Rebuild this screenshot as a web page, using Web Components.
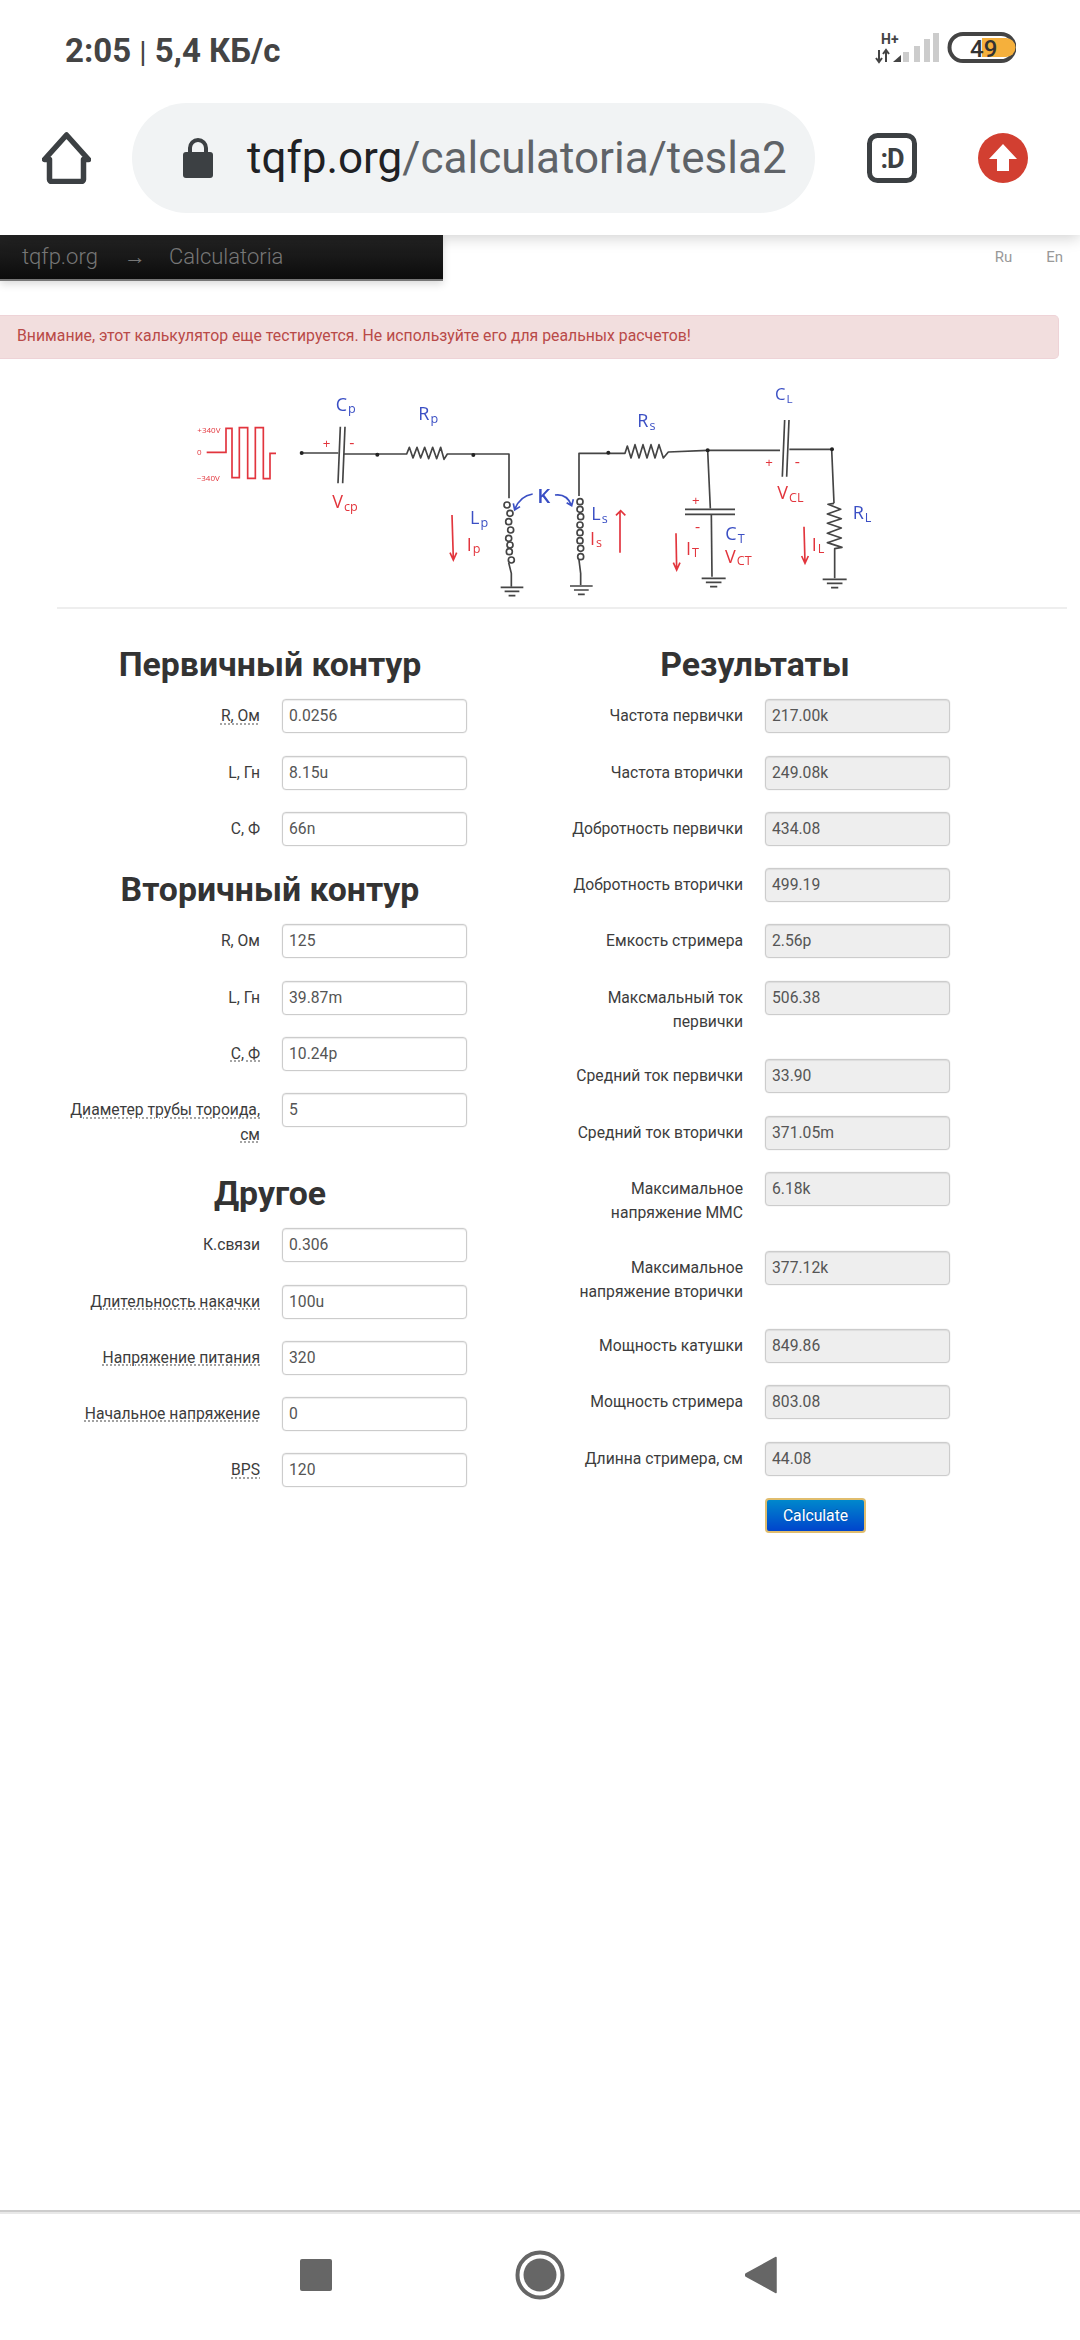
<!DOCTYPE html>
<html lang="ru">
<head>
<meta charset="utf-8">
<title>tesla2</title>
<style>
  html, body { margin: 0; padding: 0; background: #fff; }
  body { font-family: Roboto, "Liberation Sans", sans-serif; width: 1080px; height: 2340px; overflow: hidden; display: flex; flex-direction: column; }
  page-main { flex: 1; }
</style>
</head>
<body>
<phone-header></phone-header>
<page-main>
  <site-topbar></site-topbar>
  <alert-box>Внимание, этот калькулятор еще тестируется. Не используйте его для реальных расчетов!</alert-box>
  <circuit-diagram></circuit-diagram>
  <calc-form>
    <form-column slot="left">
      <h-title>Первичный контур</h-title>
      <calc-field hint value="0.0256">R, Ом</calc-field>
      <calc-field value="8.15u">L, Гн</calc-field>
      <calc-field value="66n">C, Ф</calc-field>
      <h-title>Вторичный контур</h-title>
      <calc-field value="125">R, Ом</calc-field>
      <calc-field value="39.87m">L, Гн</calc-field>
      <calc-field hint value="10.24p">C, Ф</calc-field>
      <calc-field hint value="5">Диаметер трубы тороида, см</calc-field>
      <h-title>Другое</h-title>
      <calc-field value="0.306">К.связи</calc-field>
      <calc-field hint value="100u">Длительность накачки</calc-field>
      <calc-field hint value="320">Напряжение питания</calc-field>
      <calc-field hint value="0">Начальное напряжение</calc-field>
      <calc-field hint value="120">BPS</calc-field>
    </form-column>
    <form-column slot="right">
      <h-title>Результаты</h-title>
      <calc-field readonly value="217.00k">Частота первички</calc-field>
      <calc-field readonly value="249.08k">Частота вторички</calc-field>
      <calc-field readonly value="434.08">Добротность первички</calc-field>
      <calc-field readonly value="499.19">Добротность вторички</calc-field>
      <calc-field readonly value="2.56p">Емкость стримера</calc-field>
      <calc-field readonly value="506.38">Максмальный ток первички</calc-field>
      <calc-field readonly value="33.90">Средний ток первички</calc-field>
      <calc-field readonly value="371.05m">Средний ток вторички</calc-field>
      <calc-field readonly value="6.18k">Максимальное напряжение ММС</calc-field>
      <calc-field readonly value="377.12k">Максимальное напряжение вторички</calc-field>
      <calc-field readonly value="849.86">Мощность катушки</calc-field>
      <calc-field readonly value="803.08">Мощность стримера</calc-field>
      <calc-field readonly value="44.08">Длинна стримера, см</calc-field>
      <calc-button>Calculate</calc-button>
    </form-column>
  </calc-form>
</page-main>
<nav-bar></nav-bar>

<script>
function shadow(el, html) {
  el.attachShadow({ mode: 'open' }).innerHTML = html;
}

class PhoneHeader extends HTMLElement {
  constructor() {
    super();
    shadow(this, `
      <style>
        :host { display: block; height: 235px; background: #fff; position: relative; z-index: 2; box-shadow: 0 3px 14px rgba(0,0,0,.18); }
        .status { height: 100px; display: flex; align-items: flex-start; justify-content: space-between; padding: 31px 64px 0 65px; box-sizing: border-box; }
        .time { font: 700 33px/40px Roboto, sans-serif; color: #444; white-space: nowrap; }
        .time span { font-weight: 400; font-size: 30px; }
        .indicators { margin-top: 1px; }
        .bar { height: 135px; display: flex; align-items: center; padding: 0 52px 19px 42px; box-sizing: border-box; }
        .pill { width: 684px; height: 110px; margin-left: 41px; border-radius: 55px; background: #f1f3f4; display: flex; align-items: center; box-sizing: border-box; padding-left: 51px; overflow: hidden; }
        .url { font: 400 44px/54px Roboto, sans-serif; margin-left: 34px; color: #5f6368; white-space: nowrap; }
        .url b { font-weight: 400; color: #202124; }
        .tab { margin-left: 52px; }
        .up { margin-left: 61px; }
        svg { display: block; flex: none; }
      </style>
      <div class="status">
        <div class="time">2:05 <span>|</span> 5,4 КБ/с</div>
        <svg class="indicators" width="141" height="36" viewBox="0 0 141 36">
          <text x="6" y="12" font-family="Roboto, sans-serif" font-weight="700" font-size="14" fill="#444">H+</text>
          <path d="M4 18v12M1 26l3 4 3-4M11 30V18M8 22l3-4 3 4" fill="none" stroke="#444" stroke-width="2"/>
          <path d="M18 30l8-7v7z" fill="#444"/>
          <path d="M29 30V20h6v10zM40 30V14h6v16zM50 30V7h6v23zM59 30V1h6v29z" fill="#ccc" transform="translate(-1 0)"/>
          <rect x="74.5" y="2" width="65" height="27" rx="13.5" fill="#fff" stroke="#444" stroke-width="4"/>
          <path d="M107 6h24a9.500 9.500 0 0 1 0 19h-24z" fill="#f5b03c"/>
          <text x="95" y="25" font-family="Roboto, sans-serif" font-weight="500" font-size="24" fill="#333">49</text>
        </svg>
      </div>
      <div class="bar">
        <svg width="49" height="52" viewBox="0 0 49 52">
          <path d="M24.500 3L2.500 27.500H7.500V47.500a2 2 0 0 0 2 2H39.500a2 2 0 0 0 2-2V27.500H46.500Z" fill="none" stroke="#3c4043" stroke-width="5.500" stroke-linejoin="round"/>
        </svg>
        <div class="pill">
          <svg width="30" height="40" viewBox="0 0 30 40">
            <path d="M7 17V10a8 8 0 0 1 16 0v7" fill="none" stroke="#3c4043" stroke-width="4"/>
            <rect x="0" y="14" width="30" height="26" rx="3" fill="#3c4043"/>
          </svg>
          <div class="url"><b>tqfp.org</b>/calculatoria/tesla2</div>
        </div>
        <svg class="tab" width="50" height="50" viewBox="0 0 50 50">
          <rect x="2.500" y="2.500" width="45" height="45" rx="8" fill="none" stroke="#3c4043" stroke-width="5"/>
          <text x="25" y="34.500" text-anchor="middle" font-family="Roboto, sans-serif" font-weight="700" font-size="27" letter-spacing="-1" fill="#3c4043">:D</text>
        </svg>
        <svg class="up" width="50" height="50" viewBox="0 0 50 50">
          <circle cx="25" cy="25" r="25" fill="#d23f31"/>
          <path d="M25 11L39 26H31V38H19V26H11Z" fill="#fff"/>
        </svg>
      </div>
    `);
  }
}

class SiteTopbar extends HTMLElement {
  constructor() {
    super();
    shadow(this, `
      <style>
        :host { display: flex; justify-content: space-between; align-items: flex-start; height: 46px; }
        .crumbs { width: 443px; height: 46px; box-sizing: border-box; background: linear-gradient(#242424, #0c0c0c); border-bottom: 2px solid #777; box-shadow: 0 3px 8px rgba(0,0,0,.15); padding-left: 22px; display: flex; align-items: center; font: 300 22px/30px Roboto, sans-serif; color: #777; white-space: nowrap; }
        .arrow { margin: 0 23px 0 26px; font-size: 22px; line-height: 30px; }
        .lang { display: flex; gap: 34px; padding: 12px 17px 0 0; font: 400 15px/20px Roboto, sans-serif; color: #999; }
      </style>
      <div class="crumbs"><span>tqfp.org</span><span class="arrow">→</span><span>Calculatoria</span></div>
      <div class="lang"><span>Ru</span><span>En</span></div>
    `);
  }
}

class AlertBox extends HTMLElement {
  constructor() {
    super();
    shadow(this, `
      <style>
        :host { display: block; box-sizing: border-box; width: 1059px; height: 44px; margin-top: 34px; padding: 0 17px; background: #f2dede; border: 1px solid #eed3d7; border-left: 0; border-radius: 0 5px 5px 0; color: #b94a48; font: 400 15.800px/40px Roboto, sans-serif; white-space: nowrap; }
      </style>
      <slot></slot>
    `);
  }
}

class CircuitDiagram extends HTMLElement {
  constructor() {
    super();
    const B = '#3a4fc4', R = '#e2353c';
    const lbl = (x, y, c, s, sub, size) =>
      `<text x="${x}" y="${y}" fill="${c}" font-size="${size || 54}">${s}<tspan font-size="${(size || 54) * .7}" dx="3" dy="8">${sub || ''}</tspan></text>`;
    const gnd = (x, y, w) =>
      `<path d="M${x - w} ${y}h${w * 2}M${x - w * .65} ${y + 12}h${w * 1.3}M${x - w * .3} ${y + 25}h${w * .6}"/>`;
    const coil = (pts) => pts.map(p => `<circle cx="${p[0]}" cy="${p[1]}" r="9"/>`).join('');
    const dot = (x, y) => `<circle cx="${x}" cy="${y}" r="6" fill="#222" stroke="none"/>`;
    shadow(this, `
      <style>
        :host { display: block; height: 230px; margin-top: 11px; padding-left: 170px; }
        svg { display: block; }
        text { font-family: "Open Sans", "Noto Sans", sans-serif; }
      </style>
      <svg width="740" height="230" viewBox="0 0 2220 690">
        <defs><filter id="soft" x="-2%" y="-2%" width="104%" height="104%"><feGaussianBlur stdDeviation="1.300"/></filter></defs>
        <g filter="url(#soft)">
          <!-- primary side -->
          <g fill="none" stroke="${R}" stroke-width="5">
            <path d="M110 247H168V175H186V323H208V173H233V325H256V173H280V326H300V250H318"/>
            <path d="M846 435L850 568M840 548L850 570L860 548"/>
          </g>
          <g fill="none" stroke="#444" stroke-width="5" stroke-linejoin="round">
            <path d="M395 249H505M522 252H710L718 232 729 264 741 232 752 264 764 232 776 266 788 232 800 266 812 232 822 268 832 252H1017V385"/>
            <path d="M511 170L504 340M525 170L518 340"/>
            ${coil([[1011,405],[1020,430],[1016,455],[1022,480],[1016,505],[1020,525],[1018,545],[1024,570]])}
            <path d="M1016 578L1024 610V650"/>
            ${gnd(1026, 652, 34)}
          </g>
          ${dot(395, 249)}${dot(622, 254)}${dot(910, 255)}
          <g fill="none" stroke="${B}" stroke-width="5">
            <path d="M1088 372Q1050 378 1034 418M1030 400L1034 420L1050 410"/>
          </g>
          ${lbl(82, 189, R, '+340V', '', 24)}
          ${lbl(81, 256, R, '0', '', 24)}
          ${lbl(80, 334, R, '~340V', '', 24)}
          ${lbl(497, 122, B, 'C', 'p')}
          ${lbl(745, 150, B, 'R', 'p')}
          ${lbl(458, 234, R, '+', '', 40)}
          ${lbl(538, 234, R, '-', '', 48)}
          ${lbl(487, 415, R, 'V', 'cp')}
          ${lbl(900, 462, B, 'L', 'p')}
          ${lbl(890, 542, R, 'I', 'p')}
          ${lbl(1104, 400, B, 'K', '', 60)}

          <!-- secondary side -->
          <g transform="translate(1080 0)">
            <g fill="none" stroke="${R}" stroke-width="5">
              <path d="M270 548V424M258 436L272 422L286 436"/>
              <path d="M438 490L440 598M430 578L440 600L450 578"/>
              <path d="M822 470L825 578M815 558L825 580L835 558"/>
            </g>
            <g fill="none" stroke="#444" stroke-width="5" stroke-linejoin="round">
              <path d="M147 378V250H285L292 228 303 264 315 224 327 264 339 224 351 264 363 224 375 264 387 224 400 264 415 246L533 241H750M778 238H905L912 400"/>
              <path d="M764 150L757 320M777 150L770 320"/>
              ${coil([[150,395],[150,418],[152,440],[150,465],[150,488],[150,512],[152,535],[152,560]])}
              <path d="M147 570L152 610V645"/>
              ${gnd(154, 648, 34)}
              <path d="M533 241L541 415M465 418H615M465 433H615M544 433L546 620"/>
              ${gnd(551, 625, 36)}
              <path d="M912 400L894 403 932 418 892 432 934 446 892 460 934 474 892 490 934 504 892 518 936 532 914 536V625"/>
              ${gnd(914, 628, 36)}
            </g>
            ${dot(235, 248)}${dot(533, 241)}${dot(906, 238)}
            <g fill="none" stroke="${B}" stroke-width="5">
              <path d="M75 375Q110 370 124 405M110 398L125 407L130 388"/>
            </g>
            ${lbl(22, 400, B, 'K', '', 60)}
            ${lbl(184, 450, B, 'L', 's')}
            ${lbl(180, 524, R, 'I', 's')}
            ${lbl(322, 172, B, 'R', 's')}
            ${lbl(735, 90, B, 'C', 'L', 50)}
            ${lbl(706, 292, R, '+', '', 40)}
            ${lbl(794, 292, R, '-', '', 48)}
            ${lbl(742, 387, R, 'V', 'CL')}
            ${lbl(486, 404, R, '+', '', 40)}
            ${lbl(495, 486, R, '-', '', 48)}
            ${lbl(586, 510, B, 'C', 'T')}
            ${lbl(468, 554, R, 'I', 'T')}
            ${lbl(585, 578, R, 'V', 'CT')}
            ${lbl(968, 448, B, 'R', 'L')}
            ${lbl(845, 542, R, 'I', 'L')}
          </g>
        </g>
      </svg>
    `);
  }
}

class CalcForm extends HTMLElement {
  constructor() {
    super();
    shadow(this, `
      <style>
        :host { display: block; }
        hr { border: 0; height: 2px; background: #eee; margin: 7px 13px 34px 57px; }
        .cols { display: grid; grid-template-columns: 416px 420px; column-gap: 67px; padding-left: 62px; }
      </style>
      <hr>
      <div class="cols"><slot name="left"></slot><slot name="right"></slot></div>
    `);
  }
}

class FormColumn extends HTMLElement {
  constructor() {
    super();
    shadow(this, `<style>:host { display: block; }</style><slot></slot>`);
  }
}

class HTitle extends HTMLElement {
  constructor() {
    super();
    shadow(this, `
      <style>
        :host { display: block; height: 44px; margin-bottom: 12.300px; text-align: center; font: 700 33.800px/44px Roboto, sans-serif; color: #333; white-space: nowrap; }
      </style>
      <slot></slot>
    `);
  }
}

class CalcField extends HTMLElement {
  constructor() {
    super();
    const readonly = this.hasAttribute('readonly');
    const hint = this.hasAttribute('hint');
    shadow(this, `
      <style>
        :host { display: grid; grid-template-columns: 198px 185px; column-gap: 22px; margin-bottom: 22.300px; }
        .label { box-sizing: border-box; padding: 5px 0 2.300px; text-align: right; font: 400 15.700px/24.500px Roboto, sans-serif; color: #3c3c3c; }
        .hint { text-decoration: underline dotted #888; text-underline-offset: 2px; }
        .input { box-sizing: border-box; height: 34px; padding: 0 6px; border: 1px solid #ccc; border-radius: 4px; box-shadow: inset 0 1px 1px rgba(0,0,0,.075), 0 0 0 .5px rgba(0,0,0,.06); background: ${readonly ? '#eee' : '#fff'}; color: #555; font: 400 15.700px/31px Roboto, sans-serif; }
      </style>
      <div class="label"><span class="${hint ? 'hint' : ''}"><slot></slot></span></div>
      <div class="input">${this.getAttribute('value')}</div>
    `);
  }
}

class CalcButton extends HTMLElement {
  constructor() {
    super();
    shadow(this, `
      <style>
        :host { display: block; margin-left: 220px; width: 101px; }
        button { display: block; width: 101px; height: 35px; padding: 0; box-sizing: border-box; border: 2px solid #e0bd6e; border-radius: 4px; background: linear-gradient(#0088cc, #0044cc); color: #fff; font: 400 15.700px/30px Roboto, sans-serif; text-shadow: 0 -1px 0 rgba(0,0,0,.25); }
      </style>
      <button><slot></slot></button>
    `);
  }
}

class NavBar extends HTMLElement {
  constructor() {
    super();
    shadow(this, `
      <style>
        :host { display: block; height: 130px; box-sizing: border-box; border-top: 2px solid #ccc; background: #fff; position: relative; }
        :host::before { content: ""; display: block; height: 2px; background: #e8e8e8; }
        .icons { display: flex; padding: 36px 0 0 300px; align-items: center; }
        svg { display: block; }
        .c { margin-left: 183px; }
        .t { margin-left: 180px; }
      </style>
      <div class="icons">
        <svg width="32" height="32" viewBox="0 0 32 32"><rect width="32" height="32" rx="2" fill="#666"/></svg>
        <svg class="c" width="50" height="50" viewBox="0 0 50 50"><circle cx="25" cy="25" r="22.500" fill="none" stroke="#666" stroke-width="4"/><circle cx="25" cy="25" r="16.500" fill="#666"/></svg>
        <svg class="t" width="32" height="38" viewBox="0 0 32 38"><path d="M31 1.500V36.500L1 20a1.500 1.500 0 0 1 0-2Z" fill="#666" stroke="#666" stroke-width="1.500" stroke-linejoin="round"/></svg>
      </div>
    `);
  }
}

customElements.define('phone-header', PhoneHeader);
customElements.define('site-topbar', SiteTopbar);
customElements.define('alert-box', AlertBox);
customElements.define('circuit-diagram', CircuitDiagram);
customElements.define('calc-form', CalcForm);
customElements.define('form-column', FormColumn);
customElements.define('h-title', HTitle);
customElements.define('calc-field', CalcField);
customElements.define('calc-button', CalcButton);
customElements.define('nav-bar', NavBar);
customElements.define('page-main', class extends HTMLElement {
  constructor() {
    super();
    shadow(this, `<style>:host { display: block; }</style><slot></slot>`);
  }
});
</script>
</body>
</html>
